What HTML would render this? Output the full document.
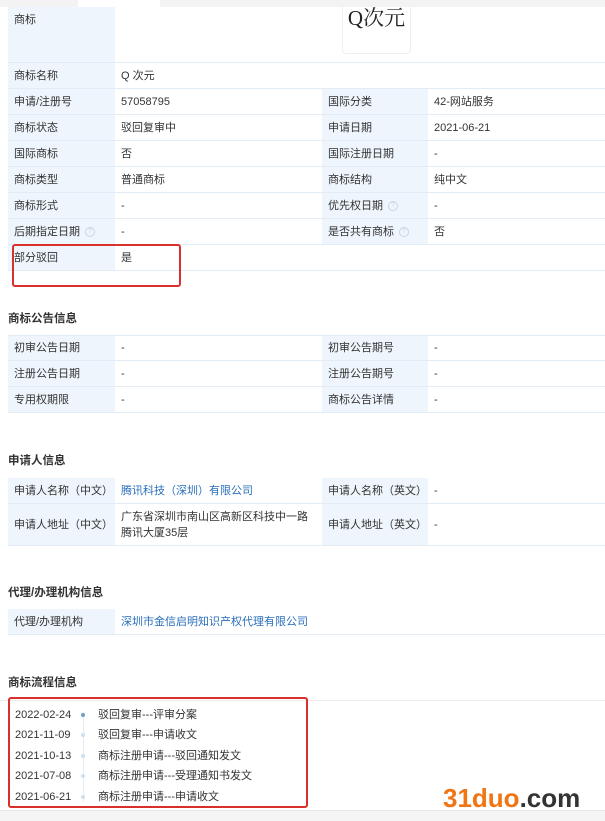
<!DOCTYPE html>
<html><head><meta charset="utf-8"><style>
*{margin:0;padding:0;box-sizing:border-box}
body{width:605px;height:821px;overflow:hidden;background:#fff;position:relative;font-family:"Liberation Sans","Noto Sans CJK SC",sans-serif;font-size:11px;color:#333;line-height:14px}
.a{position:absolute}
.l{position:absolute;background:#eef5fc;border-bottom:1px solid #e3ecf5;padding-left:6px;display:flex;align-items:center;white-space:nowrap}
.v{position:absolute;background:#fff;border-bottom:1px solid #e3ecf5;padding-left:6px;display:flex;align-items:center;white-space:nowrap}
.l>span.w,.v>span.w{display:block;line-height:14px;height:14px}
.t{position:absolute;left:8px;font-size:11.5px;font-weight:bold;color:#333}
.q{display:inline-block;width:10px;height:10px;border:1px solid #c8d6e6;border-radius:50%;margin-left:5px;font-size:7px;color:#c8d6e6;text-align:center;line-height:8px}
a{color:#2a6ebb;text-decoration:none}
.tl,.tx{position:absolute;font-size:11px;line-height:14px;height:14px}
.tl{left:15px}
.tx{left:98px}
.dot{position:absolute;left:81px;width:4px;height:4px;border-radius:50%;background:#cfe0ef}
</style></head><body>
<div class="a" style="left:0;top:0;width:605px;height:7px;background:#f3f3f3"></div>
<div class="a" style="left:78px;top:0;width:82px;height:7px;background:#fff"></div>

<div class="l" style="left:8px;top:7px;width:107px;height:56px;align-items:flex-start;padding-top:6px">商标</div>
<div class="v" style="left:115px;top:7px;width:490px;height:56px"></div>
<div class="a" style="left:342px;top:7px;width:69px;height:47px;border:1px solid #eee;border-top:none;border-radius:0 0 4px 4px;font-family:'Liberation Serif','Noto Serif CJK SC',serif;font-size:21px;text-align:center;line-height:22px;color:#222">Q次元</div>

<div class="l" style="left:8px;top:63px;width:107px;height:26px"><span class="w">商标名称</span></div><div class="v" style="left:115px;top:63px;width:490px;height:26px"><span class="w">Q 次元</span></div>

<div class="l" style="left:8px;top:89px;width:107px;height:26px"><span class="w">申请/注册号</span></div><div class="v" style="left:115px;top:89px;width:207px;height:26px"><span class="w">57058795</span></div><div class="l" style="left:322px;top:89px;width:106px;height:26px"><span class="w">国际分类</span></div><div class="v" style="left:428px;top:89px;width:177px;height:26px"><span class="w">42-网站服务</span></div>
<div class="l" style="left:8px;top:115px;width:107px;height:26px"><span class="w">商标状态</span></div><div class="v" style="left:115px;top:115px;width:207px;height:26px"><span class="w">驳回复审中</span></div><div class="l" style="left:322px;top:115px;width:106px;height:26px"><span class="w">申请日期</span></div><div class="v" style="left:428px;top:115px;width:177px;height:26px"><span class="w">2021-06-21</span></div>
<div class="l" style="left:8px;top:141px;width:107px;height:26px"><span class="w">国际商标</span></div><div class="v" style="left:115px;top:141px;width:207px;height:26px"><span class="w">否</span></div><div class="l" style="left:322px;top:141px;width:106px;height:26px"><span class="w">国际注册日期</span></div><div class="v" style="left:428px;top:141px;width:177px;height:26px"><span class="w">-</span></div>
<div class="l" style="left:8px;top:167px;width:107px;height:26px"><span class="w">商标类型</span></div><div class="v" style="left:115px;top:167px;width:207px;height:26px"><span class="w">普通商标</span></div><div class="l" style="left:322px;top:167px;width:106px;height:26px"><span class="w">商标结构</span></div><div class="v" style="left:428px;top:167px;width:177px;height:26px"><span class="w">纯中文</span></div>
<div class="l" style="left:8px;top:193px;width:107px;height:26px"><span class="w">商标形式</span></div><div class="v" style="left:115px;top:193px;width:207px;height:26px"><span class="w">-</span></div><div class="l" style="left:322px;top:193px;width:106px;height:26px">优先权日期<span class="q">?</span></div><div class="v" style="left:428px;top:193px;width:177px;height:26px"><span class="w">-</span></div>
<div class="l" style="left:8px;top:219px;width:107px;height:26px">后期指定日期<span class="q">?</span></div><div class="v" style="left:115px;top:219px;width:207px;height:26px"><span class="w">-</span></div><div class="l" style="left:322px;top:219px;width:106px;height:26px">是否共有商标<span class="q">?</span></div><div class="v" style="left:428px;top:219px;width:177px;height:26px"><span class="w">否</span></div>
<div class="l" style="left:8px;top:245px;width:107px;height:26px"><span class="w">部分驳回</span></div><div class="v" style="left:115px;top:245px;width:490px;height:26px"><span class="w">是</span></div>
<div class="a" style="left:12px;top:244px;width:169px;height:43px;border:2px solid #d9302c;border-radius:3px"></div>

<div class="t" style="top:312px">商标公告信息</div>
<div class="l" style="left:8px;top:335px;width:107px;height:26px"><span class="w">初审公告日期</span></div><div class="v" style="left:115px;top:335px;width:207px;height:26px"><span class="w">-</span></div><div class="l" style="left:322px;top:335px;width:106px;height:26px"><span class="w">初审公告期号</span></div><div class="v" style="left:428px;top:335px;width:177px;height:26px"><span class="w">-</span></div>
<div class="l" style="left:8px;top:361px;width:107px;height:26px"><span class="w">注册公告日期</span></div><div class="v" style="left:115px;top:361px;width:207px;height:26px"><span class="w">-</span></div><div class="l" style="left:322px;top:361px;width:106px;height:26px"><span class="w">注册公告期号</span></div><div class="v" style="left:428px;top:361px;width:177px;height:26px"><span class="w">-</span></div>
<div class="l" style="left:8px;top:387px;width:107px;height:26px"><span class="w">专用权期限</span></div><div class="v" style="left:115px;top:387px;width:207px;height:26px"><span class="w">-</span></div><div class="l" style="left:322px;top:387px;width:106px;height:26px"><span class="w">商标公告详情</span></div><div class="v" style="left:428px;top:387px;width:177px;height:26px"><span class="w">-</span></div>
<div class="a" style="left:8px;top:335px;width:597px;height:1px;background:#e3ecf5"></div>

<div class="t" style="top:454px">申请人信息</div>
<div class="a" style="left:8px;top:478px;width:597px;height:1px;background:#e3ecf5"></div>
<div class="l" style="left:8px;top:478px;width:107px;height:26px"><span class="w">申请人名称（中文）</span></div><div class="v" style="left:115px;top:478px;width:207px;height:26px"><span class="w"><a>腾讯科技（深圳）有限公司</a></span></div><div class="l" style="left:322px;top:478px;width:106px;height:26px"><span class="w">申请人名称（英文）</span></div><div class="v" style="left:428px;top:478px;width:177px;height:26px"><span class="w">-</span></div>
<div class="l" style="left:8px;top:504px;width:107px;height:42px"><span class="w">申请人地址（中文）</span></div><div class="v" style="left:115px;top:504px;width:207px;height:42px;white-space:normal;line-height:16px;padding-right:8px">广东省深圳市南山区高新区科技中一路腾讯大厦35层</div><div class="l" style="left:322px;top:504px;width:106px;height:42px"><span class="w">申请人地址（英文）</span></div><div class="v" style="left:428px;top:504px;width:177px;height:42px"><span class="w">-</span></div>

<div class="t" style="top:586px">代理/办理机构信息</div>
<div class="a" style="left:8px;top:609px;width:597px;height:1px;background:#e3ecf5"></div>
<div class="l" style="left:8px;top:609px;width:107px;height:26px"><span class="w">代理/办理机构</span></div><div class="v" style="left:115px;top:609px;width:490px;height:26px"><span class="w"><a>深圳市金信启明知识产权代理有限公司</a></span></div>

<div class="t" style="top:676px">商标流程信息</div>
<div class="a" style="left:0;top:700px;width:605px;height:1px;background:#ececec"></div>
<div class="a" style="left:83px;top:712px;width:1px;height:90px;background:#e3ecf5"></div>
<div class="tl" style="top:708px">2022-02-24</div><div class="dot" style="top:713px;background:#6fa0c8"></div><div class="tx" style="top:708px">驳回复审---评审分案</div>
<div class="tl" style="top:728px">2021-11-09</div><div class="dot" style="top:733px"></div><div class="tx" style="top:728px">驳回复审---申请收文</div>
<div class="tl" style="top:749px">2021-10-13</div><div class="dot" style="top:754px"></div><div class="tx" style="top:749px">商标注册申请---驳回通知发文</div>
<div class="tl" style="top:769px">2021-07-08</div><div class="dot" style="top:774px"></div><div class="tx" style="top:769px">商标注册申请---受理通知书发文</div>
<div class="tl" style="top:790px">2021-06-21</div><div class="dot" style="top:795px"></div><div class="tx" style="top:790px">商标注册申请---申请收文</div>
<div class="a" style="left:8px;top:697px;width:300px;height:111px;border:2px solid #d9302c;border-radius:3px"></div>
<div class="a" style="left:0;top:810px;width:605px;height:11px;background:#f5f5f5;border-top:1px solid #e8e8e8"></div>
<div class="a" style="left:443px;top:783px;font-size:26px;font-weight:bold;line-height:30px"><span style="color:#f07515">31duo</span><span style="color:#333">.com</span></div>
</body></html>
